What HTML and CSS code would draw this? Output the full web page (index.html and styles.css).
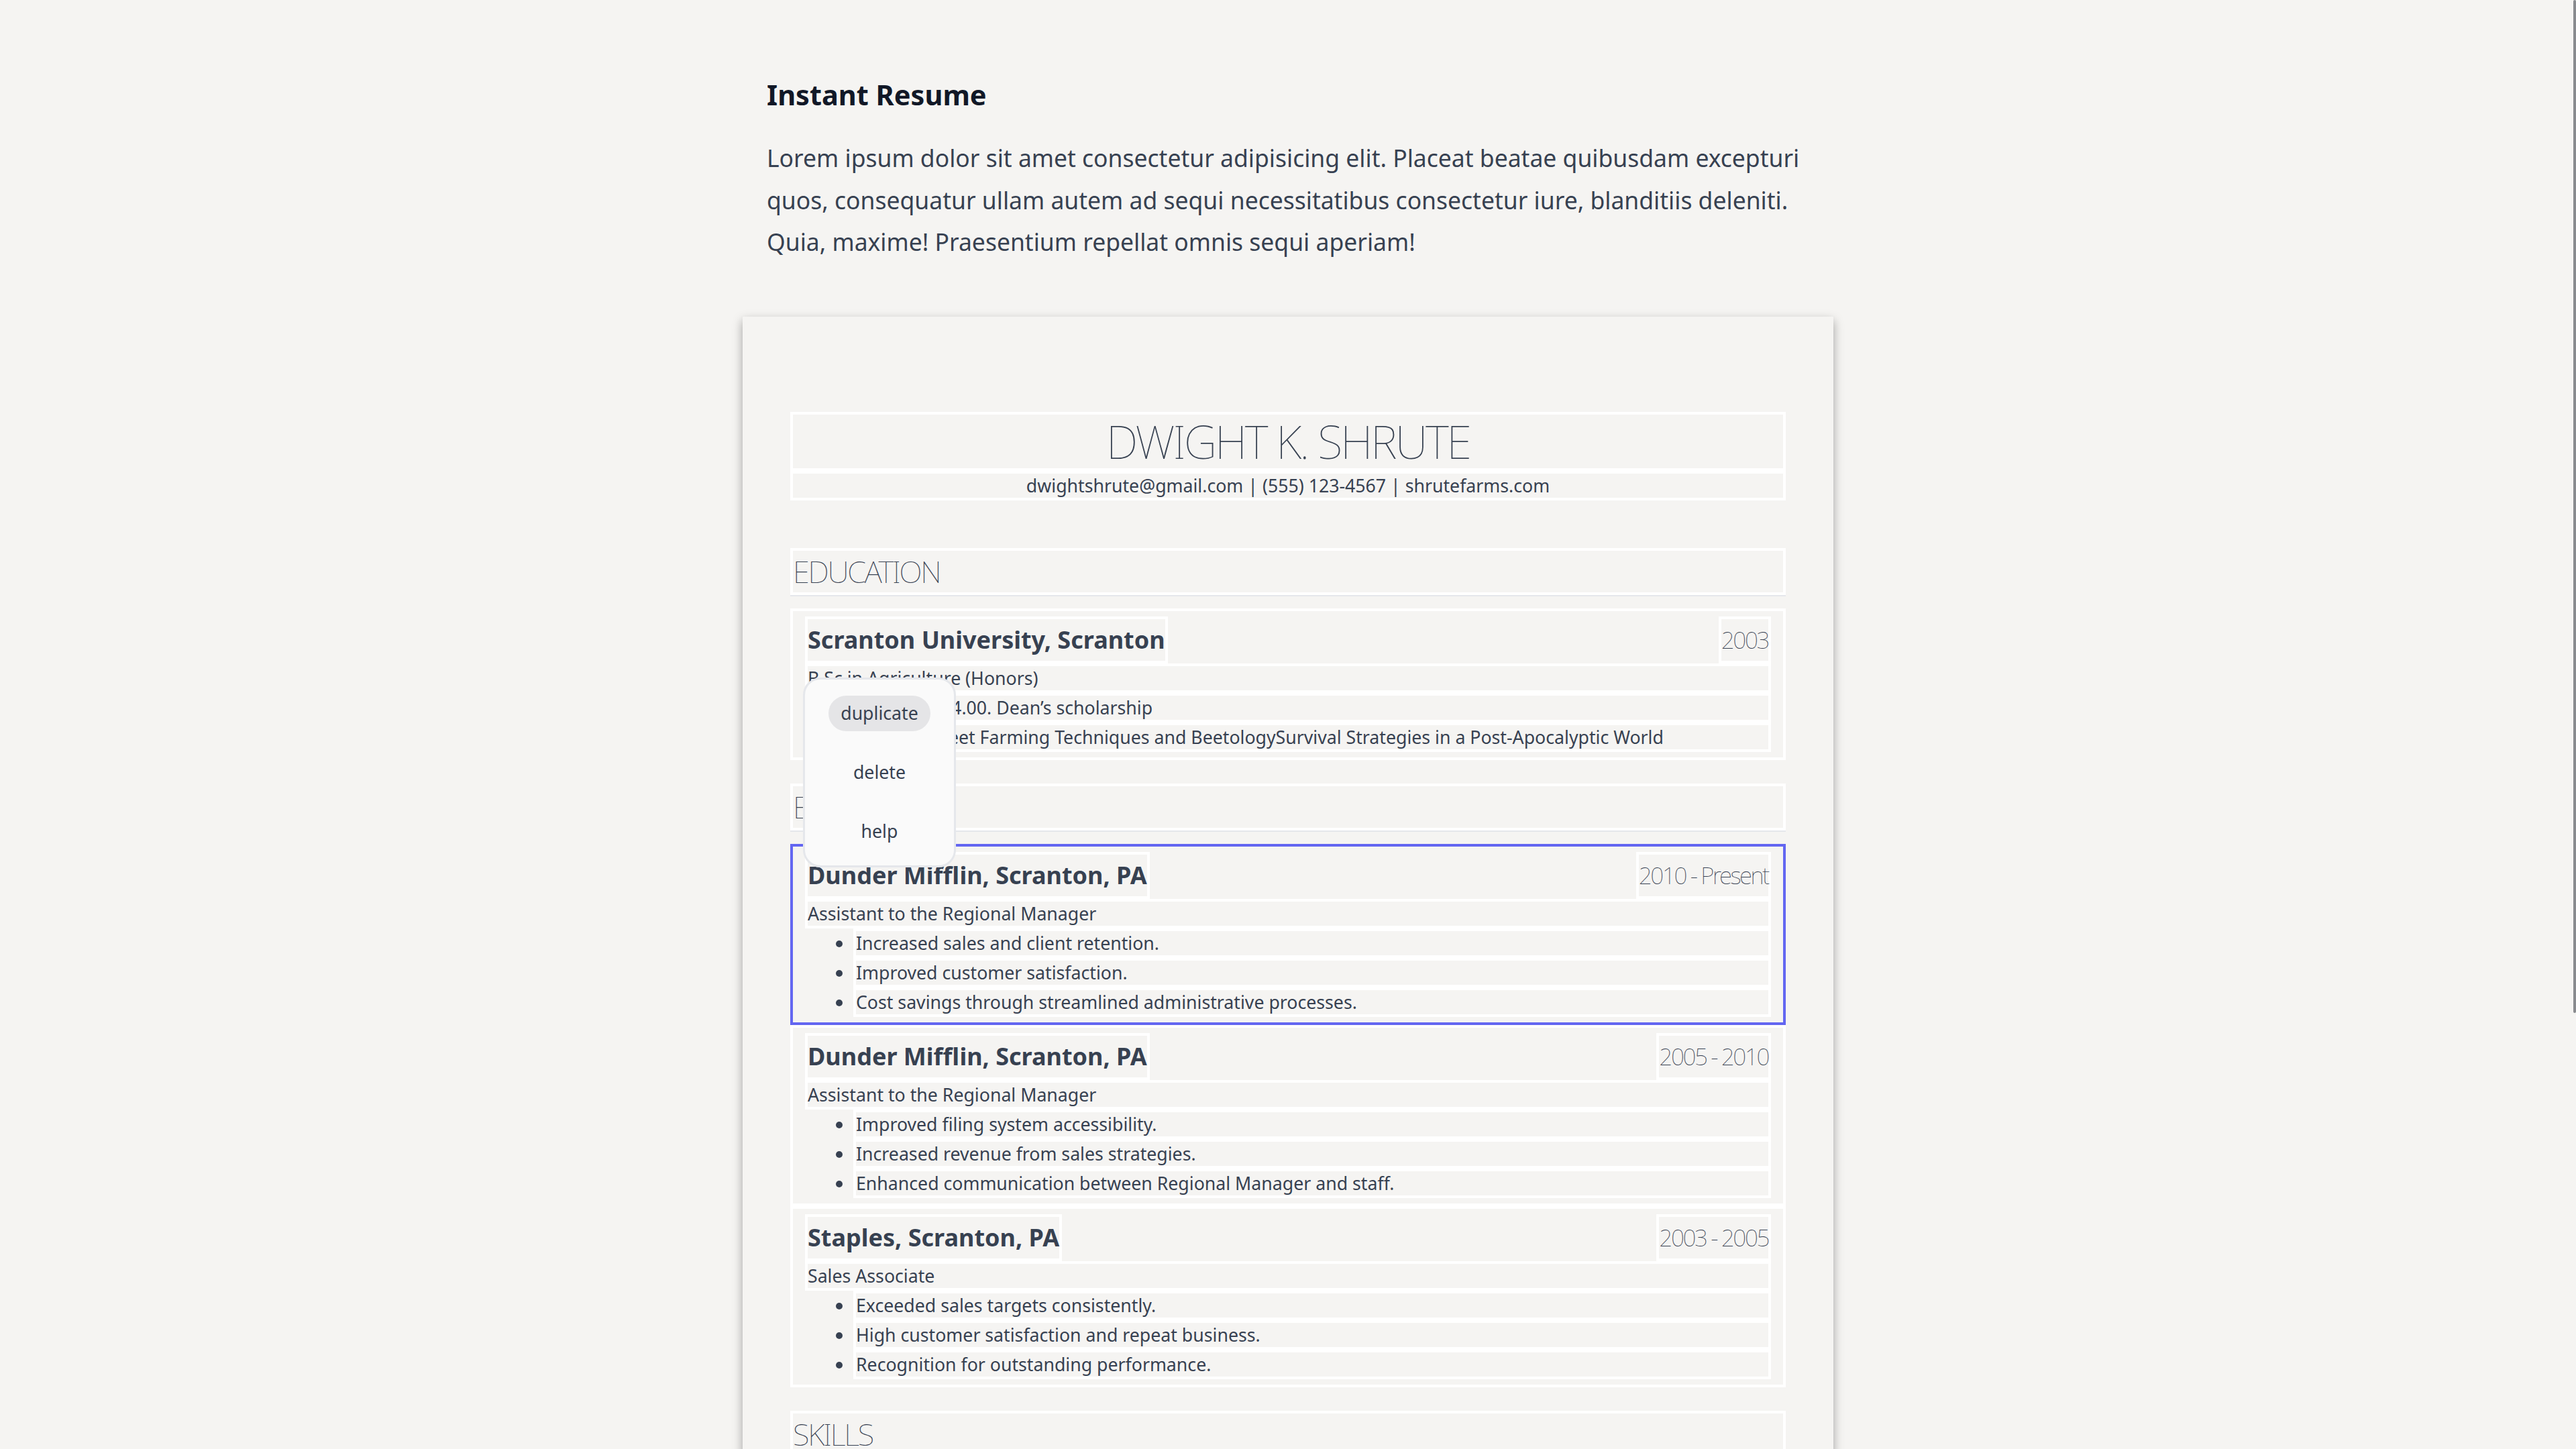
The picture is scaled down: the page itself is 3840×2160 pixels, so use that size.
FILE: index.html
```html
<!DOCTYPE html>
<html lang="en">
<head>
  <meta charset="UTF-8" />
  <title>Instant Resume</title>
  <meta name="viewport" content="width=device-width, initial-scale=1.0"/>
  <link rel="stylesheet" href="styles.css">
</head>
<body>

<div class="scroll-thumb"></div>

<main class="page">
  <section class="intro">
    <h1>Instant Resume</h1>
    <p>Lorem ipsum dolor sit amet consectetur adipisicing elit. Placeat beatae quibusdam excepturi quos, consequatur ullam autem ad sequi necessitatibus consectetur iure, blanditiis deleniti. Quia, maxime! Praesentium repellat omnis sequi aperiam!</p>
  </section>

  <div class="sheet">
    <header class="sheet-head">
      <h2 class="name">DWIGHT K. SHRUTE</h2>
      <p class="contact">dwightshrute@gmail.com | (555) 123-4567 | shrutefarms.com</p>
    </header>

    <section class="block">
      <h3 class="block-title">EDUCATION</h3>
      <div class="entry">
        <div class="entry-row">
          <span class="entry-name">Scranton University, Scranton</span>
          <span class="entry-date">2003</span>
        </div>
        <p class="line">B.Sc in Agriculture (Honors)</p>
        <p class="line">Cumulative GPA: 4.00. Dean’s scholarship</p>
        <p class="line">Courses taken: Beet Farming Techniques and BeetologySurvival Strategies in a Post-Apocalyptic World</p>

        <!-- context menu for the hovered block -->
        <ul class="menu">
          <li class="active">duplicate</li>
          <li>delete</li>
          <li>help</li>
        </ul>
      </div>
    </section>

    <section class="block">
      <h3 class="block-title">EXPERIENCE</h3>
      <div class="entry selected">
        <div class="entry-row">
          <span class="entry-name">Dunder Mifflin, Scranton, PA</span>
          <span class="entry-date">2010 - Present</span>
        </div>
        <p class="line">Assistant to the Regional Manager</p>
        <ul class="points">
          <li>Increased sales and client retention.</li>
          <li>Improved customer satisfaction.</li>
          <li>Cost savings through streamlined administrative processes.</li>
        </ul>
      </div>
      <div class="entry">
        <div class="entry-row">
          <span class="entry-name">Dunder Mifflin, Scranton, PA</span>
          <span class="entry-date">2005 - 2010</span>
        </div>
        <p class="line">Assistant to the Regional Manager</p>
        <ul class="points">
          <li>Improved filing system accessibility.</li>
          <li>Increased revenue from sales strategies.</li>
          <li>Enhanced communication between Regional Manager and staff.</li>
        </ul>
      </div>
      <div class="entry">
        <div class="entry-row">
          <span class="entry-name">Staples, Scranton, PA</span>
          <span class="entry-date">2003 - 2005</span>
        </div>
        <p class="line">Sales Associate</p>
        <ul class="points">
          <li>Exceeded sales targets consistently.</li>
          <li>High customer satisfaction and repeat business.</li>
          <li>Recognition for outstanding performance.</li>
        </ul>
      </div>
    </section>

    <section class="block">
      <h3 class="block-title">SKILLS</h3>
      <div class="entry">
        <p class="line">Beet farming, animal husbandry, martial arts (purple belt)</p>
        <p class="line">Sales, paper products, customer relations</p>
        <p class="line">Survival skills, volunteer sheriff's deputy</p>
      </div>
    </section>
  </div>
</main>

</body>
</html>
```

FILE: styles.css
```css
* { box-sizing: border-box; }

body {
  margin: 0;
  background: #f5f4f2;
  font-family: "Noto Sans", "Open Sans", sans-serif;
  color: #374151;
}

/* thin overlay scrollbar */
.scroll-thumb {
  position: fixed;
  top: 0;
  right: 0;
  width: 4px;
  height: 1510px;
  background: #898b8f;
  border-radius: 2px;
}

.page {
  padding: 113px 0 90px;
}

/* intro text */
.intro {
  width: 1554px;
  margin: 0 auto;
}

.intro h1 {
  margin: 0;
  font-size: 41.5px;
  line-height: 57px;
  font-weight: 700;
  color: #111827;
}

.intro p {
  margin: 34px 0 0;
  font-size: 35.5px;
  line-height: 62.5px;
}

/* resume sheet */
.sheet {
  width: 1626px;
  margin: 80px auto 0;
  padding: 142px 71px;
  background: #f5f4f2;
  box-shadow: 0 6px 14px rgba(0, 0, 0, 0.35);
}

.sheet-head {
  margin-bottom: 71px;
}

.name {
  margin: 0;
  border: 4px solid #fff;
  font-size: 68px;
  line-height: 80px;
  font-weight: 100;
  letter-spacing: -2.9px;
  text-align: center;
}

.contact {
  margin: 0;
  border: 4px solid #fff;
  font-size: 26.7px;
  line-height: 36px;
  text-align: center;
}

.block + .block {
  margin-top: 35px;
}

.block-title {
  margin: 0 0 20px;
  border: 4px solid #fff;
  box-shadow: 0 2px 0 #e5e7eb;
  font-size: 45px;
  line-height: 62px;
  font-weight: 100;
  letter-spacing: -2.2px;
}

.entry {
  position: relative;
  border: 4px solid #fff;
  padding: 8px 18px;
}

.entry.selected {
  border-color: #6366f1;
}

.entry-row {
  display: flex;
  justify-content: space-between;
}

.entry-name {
  border: 4px solid #fff;
  font-size: 36px;
  line-height: 62px;
  font-weight: 700;
}

.entry-date {
  border: 4px solid #fff;
  font-size: 35px;
  line-height: 62px;
  font-weight: 100;
  letter-spacing: -2.4px;
}

.line {
  margin: 0;
  border: 4px solid #fff;
  font-size: 26.7px;
  line-height: 36px;
}

.points {
  margin: 0;
  padding-left: 72px;
}

.points li {
  border: 4px solid #fff;
  font-size: 26.7px;
  line-height: 36px;
}

/* block menu */
.menu {
  position: absolute;
  z-index: 10;
  left: 15px;
  top: 99px;
  width: 228px;
  margin: 0;
  padding: 24px 0;
  list-style: none;
  display: flex;
  flex-direction: column;
  align-items: center;
  gap: 35px;
  background: #fafafa;
  border: 3px solid #e5e7eb;
  border-radius: 26px;
}

.menu li {
  padding: 8.5px 18px;
  border-radius: 999px;
  font-size: 26.7px;
  line-height: 36px;
}

.menu li.active {
  background: #e5e5e7;
}
```
